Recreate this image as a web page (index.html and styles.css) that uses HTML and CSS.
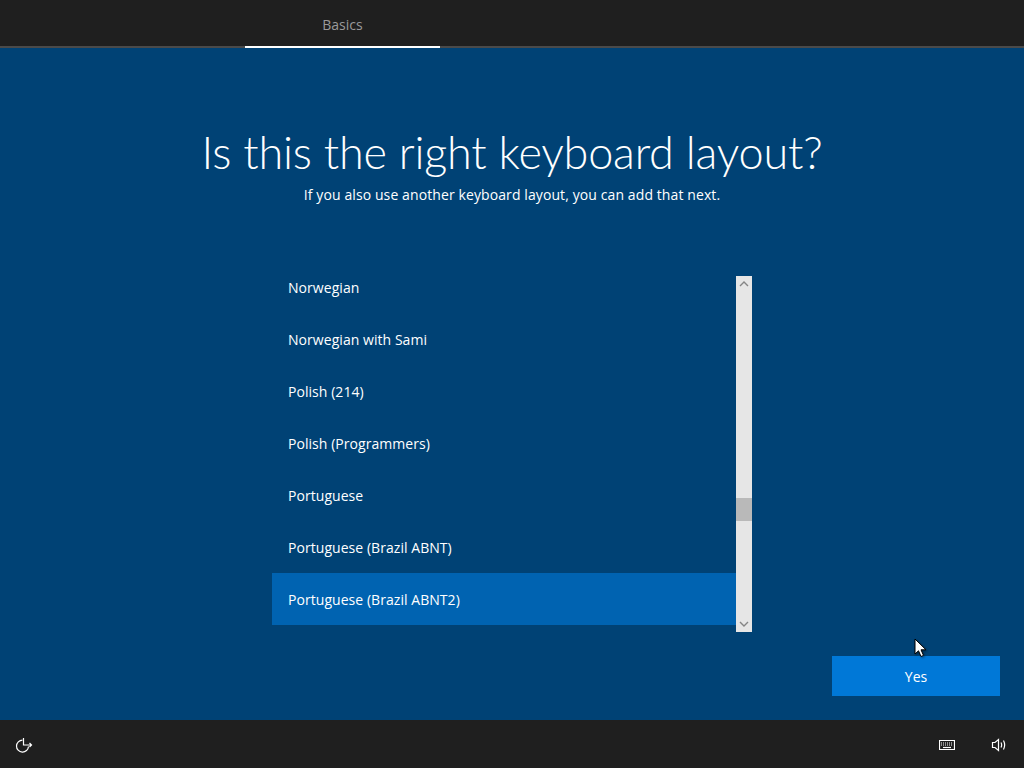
FILE: index.html
```html
<!DOCTYPE html>
<html lang="en">
<head>
  <meta charset="UTF-8">
  <meta name="viewport" content="width=device-width, initial-scale=1.0">
  <title>Keyboard layout</title>
  <link rel="stylesheet" href="styles.css">
</head>
<body>
  <header class="top-bar">
    <div class="tab">Basics</div>
  </header>

  <main class="content">
    <h1>Is this the right keyboard layout?</h1>
    <p class="subtitle">If you also use another keyboard layout, you can add that next.</p>

    <div class="picker">
      <ul class="layout-list">
        <li>Norwegian</li>
        <li>Norwegian with Sami</li>
        <li>Polish (214)</li>
        <li>Polish (Programmers)</li>
        <li>Portuguese</li>
        <li>Portuguese (Brazil ABNT)</li>
        <li class="selected">Portuguese (Brazil ABNT2)</li>
      </ul>
      <div class="scrollbar">
        <svg class="arrow" width="16" height="16" viewBox="0 0 16 16"><path d="M4 10 8 6 12 10" /></svg>
        <div class="track"><div class="thumb"></div></div>
        <svg class="arrow" width="16" height="16" viewBox="0 0 16 16"><path d="M4 6 8 10 12 6" /></svg>
      </div>
    </div>

    <div class="actions">
      <button class="btn">Yes</button>
    </div>
  </main>

  <footer class="bottom-bar">
    <svg class="icon" width="18" height="18" viewBox="0 0 18 18">
      <path d="M7.500 4.100A6 6 0 1 0 13.500 10.500" />
      <path d="M8.500 2V9H16.500M14.500 7 16.500 9 14.500 11" />
    </svg>
    <div class="tray">
      <svg class="icon" width="16" height="10" viewBox="0 0 16 10">
        <path d="M.5 .5H15.500V9.500H.5Z" />
        <path class="keys" d="M2 3H14M2 5H14" />
        <path d="M4 7.500H12" />
      </svg>
      <svg class="icon" width="16" height="14" viewBox="0 0 16 14">
        <path d="M2.500 4.500H5L8.500 1.500V12.500L5 9.500H2.500ZM11 4.500Q12.300 7 11 9.500M13.500 2.500Q15.800 7 13.500 11.500" />
      </svg>
    </div>
  </footer>

  <svg class="cursor" width="14" height="20" viewBox="0 0 14 20">
    <path d="M1 1V16L4.500 12.800 7 18.500 9.500 17.400 7 11.800H12Z" />
  </svg>
</body>
</html>
```

FILE: styles.css
```css
* {
  margin: 0;
  padding: 0;
  box-sizing: border-box;
}

body {
  font-family: "Open Sans", "Noto Sans", sans-serif;
  background: #004275;
  color: #ffffff;
  height: 768px;
  overflow: hidden;
  display: flex;
  flex-direction: column;
}

.top-bar {
  height: 48px;
  flex: none;
  background: #1f1f1f;
  border-bottom: 2px solid #4a4a4a;
  padding-left: 245px;
}

.tab {
  width: 195px;
  height: 48px;
  border-bottom: 2px solid #ffffff;
  color: #9a9a9a;
  font-size: 14px;
  line-height: 50px;
  text-align: center;
}

.content {
  flex: 1;
  display: flex;
  flex-direction: column;
  align-items: center;
  padding-top: 72px;
}

h1 {
  font-family: Lato, "Open Sans", sans-serif;
  font-size: 45px;
  font-weight: 300;
  letter-spacing: -0.2px;
  line-height: 64px;
}

.subtitle {
  font-size: 14px;
  letter-spacing: 0.1px;
  line-height: 20px;
  margin-top: 1px;
}

.picker {
  display: flex;
  width: 480px;
  height: 356px;
  margin-top: 71px;
}

.layout-list {
  flex: 1;
  list-style: none;
  overflow: hidden;
}

.layout-list li {
  height: 52px;
  padding: 2px 0 0 16px;
  line-height: 50px;
  font-size: 14px;
  letter-spacing: 0.05px;
}

.layout-list li:first-child {
  height: 37px;
  padding-top: 0;
  line-height: 24px;
}

.layout-list .selected {
  background: #0063b1;
}

.scrollbar {
  width: 16px;
  background: #e6e6e6;
  display: flex;
  flex-direction: column;
}

.arrow {
  flex: none;
  fill: none;
  stroke: #858585;
  stroke-width: 1.4;
}

.track {
  flex: 1;
  padding-top: 206px;
}

.thumb {
  height: 23px;
  background: #b9b9b9;
}

.actions {
  align-self: stretch;
  display: flex;
  justify-content: flex-end;
  padding: 24px 24px 0 0;
}

.btn {
  width: 168px;
  height: 40px;
  border: none;
  background: #0078d7;
  color: #ffffff;
  font-family: inherit;
  font-size: 14px;
}

.bottom-bar {
  height: 48px;
  flex: none;
  background: #1f1f1f;
  display: flex;
  align-items: center;
  justify-content: space-between;
  padding: 2px 18px 0 15px;
}

.tray {
  display: flex;
  align-items: center;
  gap: 35px;
}

.icon {
  fill: none;
  stroke: #ffffff;
  stroke-width: 1.2;
}

.icon .keys {
  stroke-dasharray: 1 1;
}

.cursor {
  position: absolute;
  left: 914px;
  top: 638px;
  fill: #ffffff;
  stroke: #000000;
  stroke-width: 1;
  filter: drop-shadow(1px 1px 1px rgba(0, 0, 0, 0.4));
}
```
